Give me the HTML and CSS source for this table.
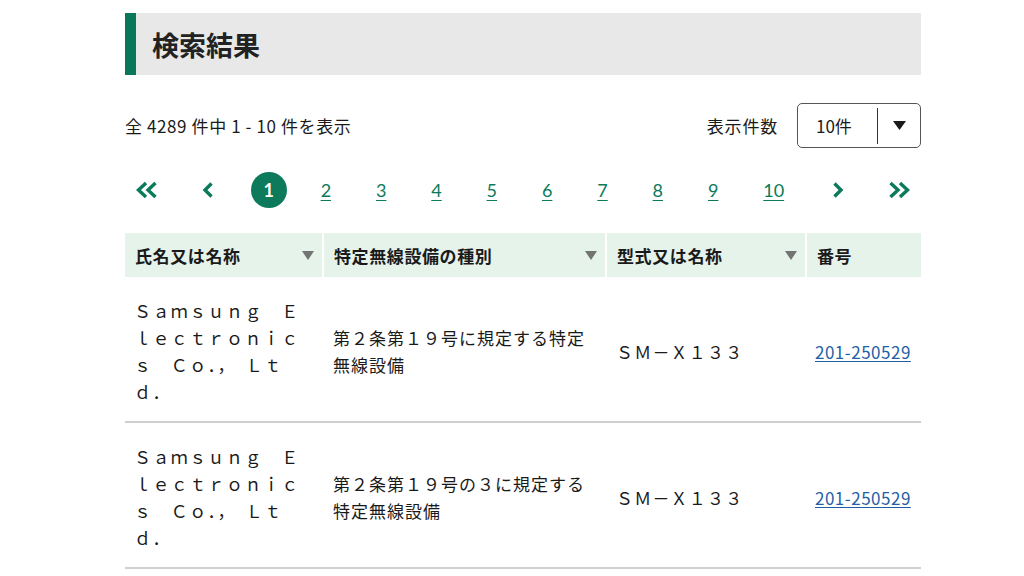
FILE: index.html
```html
<!DOCTYPE html>
<html lang="ja">
<head>
<meta charset="utf-8">
<title>検索結果</title>
<link rel="stylesheet" href="styles.css">
</head>
<body>
<main class="page">
  <h1 class="title">検索結果</h1>

  <div class="status">
    <p class="count">全 4289 件中 1 - 10 件を表示</p>
    <div class="per-page">
      <span class="per-label">表示件数</span>
      <div class="select">
        <span class="select-value">10件</span>
        <span class="select-btn">
          <svg width="13" height="9" viewBox="0 0 13 9"><path d="M0 0h13L6.5 9z" fill="#1a1a1a"/></svg>
        </span>
      </div>
    </div>
  </div>

  <nav class="pager">
    <a class="pg arrow" href="#" aria-label="最初">
      <svg width="22" height="18" viewBox="0 0 22 18"><path d="M10 2L2.5 9l7.5 7M19.5 2L12 9l7.5 7" fill="none" stroke="#0b7a5b" stroke-width="3.4"/></svg>
    </a>
    <a class="pg arrow" href="#" aria-label="前">
      <svg width="12" height="18" viewBox="0 0 12 18"><path d="M9.5 2.5L3 9l6.5 6.5" fill="none" stroke="#0b7a5b" stroke-width="3.4"/></svg>
    </a>
    <span class="pg current">1</span>
    <a class="pg num" href="#">2</a>
    <a class="pg num" href="#">3</a>
    <a class="pg num" href="#">4</a>
    <a class="pg num" href="#">5</a>
    <a class="pg num" href="#">6</a>
    <a class="pg num" href="#">7</a>
    <a class="pg num" href="#">8</a>
    <a class="pg num" href="#">9</a>
    <a class="pg num" href="#">10</a>
    <a class="pg arrow" href="#" aria-label="次">
      <svg width="12" height="18" viewBox="0 0 12 18"><path d="M2.5 2.5L9 9l-6.5 6.5" fill="none" stroke="#0b7a5b" stroke-width="3.4"/></svg>
    </a>
    <a class="pg arrow" href="#" aria-label="最後">
      <svg width="22" height="18" viewBox="0 0 22 18"><path d="M2.5 2L10 9l-7.5 7M12 2l7.5 7-7.5 7" fill="none" stroke="#0b7a5b" stroke-width="3.4"/></svg>
    </a>
  </nav>

  <table class="results">
    <colgroup>
      <col class="c1"><col class="c2"><col class="c3"><col class="c4">
    </colgroup>
    <thead>
      <tr>
        <th><div class="th-in"><span>氏名又は名称</span><span class="sort"></span></div></th>
        <th><div class="th-in"><span>特定無線設備の種別</span><span class="sort"></span></div></th>
        <th><div class="th-in"><span>型式又は名称</span><span class="sort"></span></div></th>
        <th><div class="th-in"><span>番号</span></div></th>
      </tr>
    </thead>
    <tbody>
      <tr>
        <td class="name">Ｓａｍｓｕｎｇ　Ｅｌｅｃｔｒｏｎｉｃｓ　Ｃｏ．，　Ｌｔｄ．</td>
        <td>第２条第１９号に規定する特定無線設備</td>
        <td class="model">ＳＭ－Ｘ１３３</td>
        <td class="num-cell"><a class="link" href="#">201-250529</a></td>
      </tr>
      <tr>
        <td class="name">Ｓａｍｓｕｎｇ　Ｅｌｅｃｔｒｏｎｉｃｓ　Ｃｏ．，　Ｌｔｄ．</td>
        <td>第２条第１９号の３に規定する特定無線設備</td>
        <td class="model">ＳＭ－Ｘ１３３</td>
        <td class="num-cell"><a class="link" href="#">201-250529</a></td>
      </tr>
    </tbody>
  </table>
</main>
</body>
</html>
```

FILE: styles.css
```css
* { box-sizing: border-box; }

html, body {
  margin: 0;
  padding: 0;
  background: #fff;
}

body {
  font-family: "Noto Sans CJK JP", "Noto Sans", sans-serif;
  font-size: 17px;
  color: #1a1a1a;
}

.page {
  width: 796px;
  margin: 0 0 0 125px;
  padding-top: 13px;
}

.title {
  margin: 0;
  height: 62px;
  display: flex;
  align-items: center;
  padding-left: 16px;
  background: #e8e8e8;
  border-left: 11px solid #08785a;
  font-size: 27px;
  font-weight: 700;
  color: #222;
}

.status {
  margin-top: 28px;
  display: flex;
  justify-content: space-between;
  align-items: center;
  height: 45px;
}

.count {
  margin: 0;
  letter-spacing: 0.6px;
}

.per-page {
  display: flex;
  align-items: center;
  gap: 19px;
}

.per-label {
  letter-spacing: 0.8px;
}

.select {
  width: 124px;
  height: 45px;
  border: 1px solid #555;
  border-radius: 5px;
  display: flex;
  align-items: center;
}

.select-value {
  flex: 1;
  padding-left: 18px;
}

.select-btn {
  width: 43px;
  height: 36px;
  border-left: 1px solid #333;
  display: flex;
  align-items: center;
  justify-content: center;
}

.pager {
  margin-top: 24px;
  height: 36px;
  display: flex;
  justify-content: space-between;
  align-items: center;
}

.pg {
  display: flex;
  align-items: center;
  justify-content: center;
  height: 36px;
  color: #0b7a5b;
  font-family: "Lato", "Noto Sans", sans-serif;
  font-size: 18px;
}

.arrow {
  width: 43px;
}

.num {
  min-width: 36px;
  padding: 0 13px;
  text-decoration: underline;
  text-underline-offset: 3px;
}

.current {
  width: 36px;
  border-radius: 50%;
  background: #0e7a5c;
  color: #fff;
  font-weight: 700;
  margin: 0 2px;
}

.results {
  margin-top: 25px;
  width: 796px;
  border-collapse: collapse;
  table-layout: fixed;
}

.c1 { width: 198px; }
.c2 { width: 283px; }
.c3 { width: 200px; }
.c4 { width: 115px; }

.results th {
  background: #e5f3eb;
  height: 44px;
  padding: 0 8px 0 10px;
  text-align: left;
  font-weight: 700;
  letter-spacing: 0.6px;
}

.results th + th {
  border-left: 2px solid #fff;
}

.th-in {
  display: flex;
  justify-content: space-between;
  align-items: center;
}

.sort {
  width: 0;
  height: 0;
  border-left: 6px solid transparent;
  border-right: 6px solid transparent;
  border-top: 9px solid #737373;
}

.results td {
  padding: 20px 10px 16px 10px;
  line-height: 27px;
  border-bottom: 2px solid #cfcfcf;
  vertical-align: middle;
  letter-spacing: 1px;
}

.results td.name {
  padding-left: 9px;
  padding-right: 12px;
  letter-spacing: 1.4px;
}

.results td.model {
  padding-left: 10px;
  letter-spacing: 1.2px;
}

.results td.num-cell {
  padding-left: 9px;
  padding-right: 0;
  white-space: nowrap;
}

.link {
  color: #1f5fa6;
  letter-spacing: 0.5px;
  text-underline-offset: 2px;
}
```
